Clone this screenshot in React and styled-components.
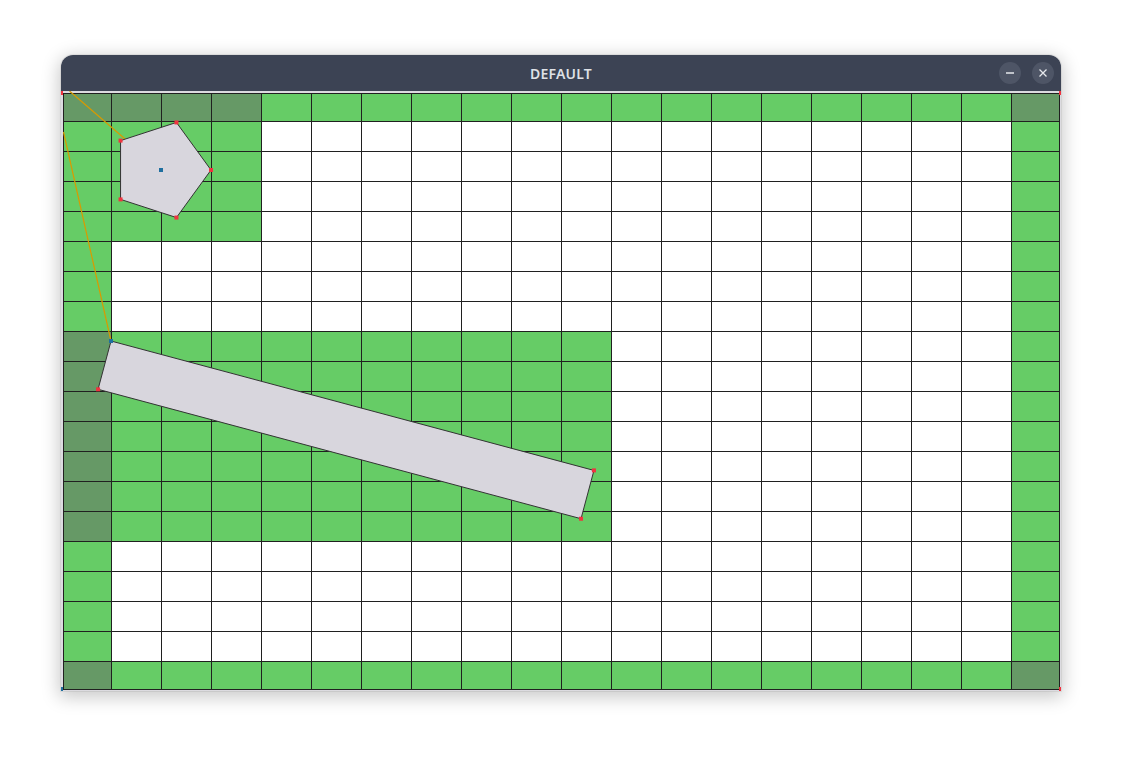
import React from "react";
import styled, { createGlobalStyle } from "styled-components";

const GlobalStyle = createGlobalStyle`
  html, body {
    margin: 0;
    padding: 0;
    background: #ffffff;
  }
`;

const Page = styled.div`
  width: 1122px;
  height: 758px;
  padding: 55px 0 0 61px;
  box-sizing: border-box;
`;

const Window = styled.div`
  width: 1000px;
  display: flex;
  flex-direction: column;
  border-radius: 12px 12px 0 0;
  overflow: hidden;
  box-shadow: 0px 4px 18px 2px rgba(0, 0, 0, 0.22), 0 0 0 1px rgba(0, 0, 0, 0.06);
`;

const TitleBar = styled.div`
  height: 36px;
  background: #3c4354;
  display: grid;
  grid-template-columns: 1fr auto 1fr;
  align-items: center;
`;

const Title = styled.div`
  grid-column: 2;
  font-family: "Noto Sans", "Open Sans", sans-serif;
  font-size: 14px;
  font-weight: 600;
  letter-spacing: 0.2px;
  color: #dfe1e6;
`;

const Controls = styled.div`
  grid-column: 3;
  justify-self: end;
  display: flex;
  gap: 11px;
  padding-right: 7px;
`;

const RoundButton = styled.div`
  width: 22px;
  height: 22px;
  border-radius: 50%;
  background: #4e5566;
  display: flex;
  align-items: center;
  justify-content: center;
`;

const Content = styled.div`
  position: relative;
  height: 600px;
  background: #dcdbe0;
  padding: 2px 1px 1px 2px;
  box-sizing: border-box;
`;

const Board = styled.div`
  display: grid;
  grid-template-columns: 47px repeat(18, 49px) 47px;
  grid-template-rows: 27px repeat(18, 29px) 27px;
  gap: 1px;
  padding: 1px;
  width: 997px;
  height: 597px;
  box-sizing: border-box;
  background: #202020;
`;

const Cell = styled.div`
  background: ${(props) =>
    props.kind === "dark" ? "#669966" : props.kind === "green" ? "#66cc66" : "#ffffff"};
`;

const Overlay = styled.svg`
  position: absolute;
  left: 0;
  top: 0;
  width: 1000px;
  height: 600px;
  overflow: hidden;
  pointer-events: none;
`;

const cellKind = (row, col) => {
  if (row === 0) {
    if (col <= 3 || col === 19) return "dark";
    return "green";
  }
  if (row === 19) {
    if (col === 0 || col === 19) return "dark";
    return "green";
  }
  if (col === 19) return "green";
  if (row >= 1 && row <= 4) return col <= 3 ? "green" : "white";
  if (row >= 8 && row <= 14) {
    if (col === 0) return "dark";
    return col <= 10 ? "green" : "white";
  }
  return col === 0 ? "green" : "white";
};

const pentagon = () => {
  const cx = 100;
  const cy = 79;
  const r = 50;
  return [0, 72, 144, 216, 288].map((a) => {
    const rad = (a * Math.PI) / 180;
    return [cx + r * Math.cos(rad), cy + r * Math.sin(rad)];
  });
};

const rectangle = () => {
  const x = 50;
  const y = 250;
  const a = (15 * Math.PI) / 180;
  const c = Math.cos(a);
  const s = Math.sin(a);
  return [
    [x, y],
    [x + 500 * c, y + 500 * s],
    [x + 500 * c - 50 * s, y + 500 * s + 50 * c],
    [x - 50 * s, y + 50 * c],
  ];
};

const Marker = ({ x, y, color }) => (
  <rect x={x - 2} y={y - 2} width="4" height="4" fill={color} />
);

const Scene = () => {
  const pent = pentagon();
  const rect = rectangle();
  const toPoints = (pts) => pts.map((p) => p.join(",")).join(" ");
  return (
    <Overlay viewBox="0 0 1000 600">
      <line x1="8.5" y1="0" x2="100" y2="79" stroke="#d99a00" strokeWidth="1.2" />
      <line x1="2.5" y1="41" x2="50" y2="250" stroke="#d99a00" strokeWidth="1.2" />
      <polygon points={toPoints(pent)} fill="#d8d6dd" stroke="#333" strokeWidth="1" />
      <polygon points={toPoints(rect)} fill="#d8d6dd" stroke="#333" strokeWidth="1" />
      {pent.map(([x, y], i) => (
        <Marker key={"p" + i} x={x} y={y} color="#f0333f" />
      ))}
      <Marker x={100} y={79} color="#1f6f9f" />
      {rect.map(([x, y], i) => (
        <Marker key={"r" + i} x={x} y={y} color={i === 0 ? "#1f6f9f" : "#f0333f"} />
      ))}
      <rect x="0" y="0" width="2" height="4" fill="#f0333f" />
      <rect x="998" y="0" width="2" height="4" fill="#f0333f" />
      <rect x="0" y="596" width="2" height="4" fill="#1f6f9f" />
      <rect x="998" y="596" width="2" height="4" fill="#f0333f" />
    </Overlay>
  );
};

export default function App() {
  const cells = [];
  for (let r = 0; r < 20; r++) {
    for (let c = 0; c < 20; c++) {
      cells.push(<Cell key={r + "-" + c} kind={cellKind(r, c)} />);
    }
  }
  return (
    <Page>
      <GlobalStyle />
      <Window>
        <TitleBar>
          <Title>DEFAULT</Title>
          <Controls>
            <RoundButton>
              <svg width="10" height="10" viewBox="0 0 10 10">
                <line x1="1" y1="5" x2="9" y2="5" stroke="#e6e8ec" strokeWidth="1.3" />
              </svg>
            </RoundButton>
            <RoundButton>
              <svg width="10" height="10" viewBox="0 0 10 10">
                <path d="M1.5 1.5 L8.5 8.5 M8.5 1.5 L1.5 8.5" stroke="#e6e8ec" strokeWidth="1.3" />
              </svg>
            </RoundButton>
          </Controls>
        </TitleBar>
        <Content>
          <Board>{cells}</Board>
          <Scene />
        </Content>
      </Window>
    </Page>
  );
}
